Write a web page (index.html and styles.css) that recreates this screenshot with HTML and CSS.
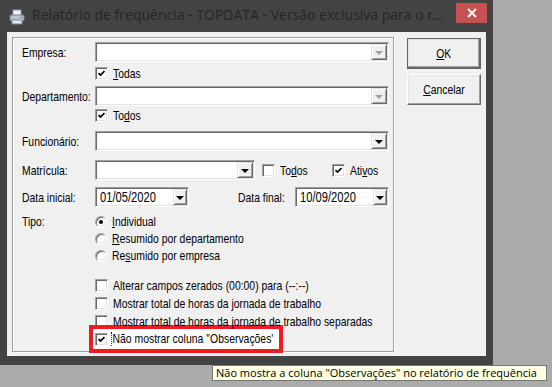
FILE: index.html
```html
<!DOCTYPE html>
<html lang="pt-BR">
<head>
    <meta charset="UTF-8">
    <title>Relatório de freqüência</title>
    <link rel="stylesheet" href="styles.css">
</head>
<body>

    <div class="window">
        <div class="titlebar">
            <svg class="app-icon" width="16" height="16" viewBox="0 0 16 16">
                <rect x="4" y="1" width="8" height="6" fill="#f4f4f4" stroke="#8aa0b8" stroke-width="1"/>
                <rect x="1" y="6" width="14" height="6" rx="1" fill="#b8c4d0" stroke="#6f7f90" stroke-width="1"/>
                <rect x="3" y="11" width="10" height="4" fill="#e6e6e6" stroke="#7d8a96" stroke-width="1"/>
                <rect x="11" y="8" width="2" height="1" fill="#5a9a5a"/>
            </svg>
            <span class="title">Relatório de freqüência - TOPDATA - Versão exclusiva para o r...</span>
            <div class="close-btn">
                <svg width="10" height="10" viewBox="0 0 10 10"><path d="M1 1 L9 9 M9 1 L1 9" stroke="#fff" stroke-width="1.8"/></svg>
            </div>
        </div>

        <div class="client">
            <div class="group">
                <div class="row combo-row">
                    <span class="lbl"><span class="txt">Empresa:</span></span>
                    <div class="combo disabled"><span class="drop"><i class="arrow"></i></span></div>
                </div>
                <div class="row check-row r-todas">
                    <span class="lbl"></span>
                    <span class="check on"><svg width="7" height="7" viewBox="0 0 7 7"><path d="M0.5 3 L2.5 5 L6.5 1" stroke="#000" stroke-width="1.7" fill="none"/></svg></span>
                    <span class="opt txt"><u>T</u>odas</span>
                </div>
                <div class="row combo-row r-depto">
                    <span class="lbl"><span class="txt">Departamento:</span></span>
                    <div class="combo disabled"><span class="drop"><i class="arrow"></i></span></div>
                </div>
                <div class="row check-row r-todos">
                    <span class="lbl"></span>
                    <span class="check on"><svg width="7" height="7" viewBox="0 0 7 7"><path d="M0.5 3 L2.5 5 L6.5 1" stroke="#000" stroke-width="1.7" fill="none"/></svg></span>
                    <span class="opt txt">To<u>d</u>os</span>
                </div>
                <div class="row combo-row r-func">
                    <span class="lbl"><span class="txt">Funcionário:</span></span>
                    <div class="combo"><span class="drop"><i class="arrow"></i></span></div>
                </div>
                <div class="row combo-row r-matr">
                    <span class="lbl"><span class="txt">Matrícula:</span></span>
                    <div class="combo short"><span class="drop"><i class="arrow"></i></span></div>
                    <div class="inline-opt opt-todos">
                        <span class="check"></span>
                        <span class="opt txt">To<u>d</u>os</span>
                    </div>
                    <div class="inline-opt">
                        <span class="check on"><svg width="7" height="7" viewBox="0 0 7 7"><path d="M0.5 3 L2.5 5 L6.5 1" stroke="#000" stroke-width="1.7" fill="none"/></svg></span>
                        <span class="opt txt">Ati<u>v</u>os</span>
                    </div>
                </div>
                <div class="row combo-row r-data">
                    <span class="lbl"><span class="txt">Data inicial:</span></span>
                    <div class="combo date"><span class="val txt">01/05/2020</span><span class="drop"><i class="arrow"></i></span></div>
                    <span class="lbl-final txt">Data final:</span>
                    <div class="combo date"><span class="val txt">10/09/2020</span><span class="drop"><i class="arrow"></i></span></div>
                </div>
                <div class="row tipo">
                    <span class="lbl"><span class="txt">Tipo:</span></span>
                    <div class="radios">
                        <div class="radio-row"><span class="radio on"></span><span class="opt txt"><u>I</u>ndividual</span></div>
                        <div class="radio-row"><span class="radio"></span><span class="opt txt"><u>R</u>esumido por departamento</span></div>
                        <div class="radio-row"><span class="radio"></span><span class="opt txt">Re<u>s</u>umido por empresa</span></div>
                    </div>
                </div>
                <div class="options">
                    <div class="row opt-row">
                        <span class="lbl"></span>
                        <span class="check"></span>
                        <span class="opt txt">Alterar campos zerados (00:00) para (--:--)</span>
                    </div>
                    <div class="row opt-row">
                        <span class="lbl"></span>
                        <span class="check"></span>
                        <span class="opt txt">Mostrar total de horas da jornada de trabalho</span>
                    </div>
                    <div class="row opt-row">
                        <span class="lbl"></span>
                        <span class="check"></span>
                        <span class="opt txt">Mostrar total de horas da jornada de trabalho separadas</span>
                    </div>
                    <div class="row opt-row">
                        <span class="lbl"></span>
                        <div class="highlight">
                            <span class="check on"><svg width="7" height="7" viewBox="0 0 7 7"><path d="M0.5 3 L2.5 5 L6.5 1" stroke="#000" stroke-width="1.7" fill="none"/></svg></span>
                            <span class="opt focus">Não mostrar coluna ''Observações'</span>
                        </div>
                    </div>
                </div>
            </div>

            <div class="buttons">
                <div class="btn default"><span class="txt"><u>O</u>K</span></div>
                <div class="btn"><span class="txt"><u>C</u>ancelar</span></div>
            </div>
        </div>
    </div>

    <div class="tooltip">Não mostra a coluna "Observações" no relatório de frequência</div>

</body>
</html>
```

FILE: styles.css
```css
html, body {
    margin: 0;
    padding: 0;
}
body {
    width: 552px;
    height: 387px;
    overflow: hidden;
    background-color: #ababab;
    font-family: "Liberation Sans", Arial, sans-serif;
    font-size: 13.5px;
    color: #000;
    position: relative;
}
u {
    text-decoration: underline;
    text-underline-offset: 1px;
}
/* the dialog font is a tall, narrow bitmap face */
.txt {
    display: inline-block;
    transform: scaleX(0.77);
    transform-origin: 0 50%;
    white-space: nowrap;
}

/* window frame */
.window {
    width: 493px;
    height: 365px;
    background-color: #434343;
    display: flex;
    flex-direction: column;
}
.titlebar {
    height: 32px;
    display: flex;
    align-items: flex-start;
    position: relative;
}
.app-icon {
    margin: 9px 0 0 9px;
}
.title {
    margin: 5px 0 0 7px;
    font-family: "Open Sans", "Noto Sans", sans-serif;
    font-size: 14px;
    color: #262626;
    white-space: nowrap;
}
.close-btn {
    position: absolute;
    left: 456px;
    top: 3px;
    width: 31px;
    height: 20px;
    background-color: #c75050;
    display: flex;
    align-items: center;
    justify-content: center;
}
.client {
    flex: 1;
    margin: 0 7px 9px 7px;
    background-color: #f0f0f0;
    display: flex;
    padding: 5px 0 0 5px;
}

/* group box */
.group {
    width: 382px;
    height: 315px;
    box-sizing: border-box;
    border: 1px solid #a0a0a0;
    box-shadow: inset 1px 1px 0 #fff, 1px 1px 0 #fff;
    padding: 4px 4px 0 9px;
}
.row {
    display: flex;
    align-items: center;
}
.lbl {
    width: 73px;
    flex-shrink: 0;
    white-space: nowrap;
}
.combo-row {
    height: 20px;
}
.check-row {
    height: 14px;
}
.r-todas { margin-top: 4px; }
.r-depto { margin-top: 6px; }
.r-todos { margin-top: 2px; }
.r-func { margin-top: 9px; }
.r-matr { margin-top: 9px; }
.r-data { margin-top: 7px; }
.tipo {
    margin-top: 6px;
    align-items: flex-start;
}
.tipo .lbl {
    line-height: 17px;
}
.options {
    margin-top: 12px;
}
.opt-row {
    height: 18px;
}
.opt {
    margin-left: 5px;
    white-space: nowrap;
}

/* sunken combo box */
.combo {
    flex: 1;
    height: 20px;
    box-sizing: border-box;
    background-color: #fff;
    border: 1px solid;
    border-color: #a0a0a0 #fff #fff #a0a0a0;
    box-shadow: inset 1px 1px 0 #696969, inset -1px -1px 0 #e3e3e3;
    display: flex;
    justify-content: flex-end;
    align-items: center;
    padding: 1px;
}
.combo.short {
    flex: none;
    width: 160px;
}
.combo.date {
    flex: none;
    width: 94px;
    justify-content: space-between;
}
.combo .val {
    margin-left: 3px;
    font-size: 14.5px;
}
.drop {
    width: 16px;
    height: 16px;
    box-sizing: border-box;
    background-color: #f0f0f0;
    border: 1px solid;
    border-color: #e3e3e3 #696969 #696969 #e3e3e3;
    box-shadow: inset 1px 1px 0 #fff, inset -1px -1px 0 #a0a0a0;
    display: flex;
    align-items: center;
    justify-content: center;
}
.arrow {
    width: 0;
    height: 0;
    border-left: 4px solid transparent;
    border-right: 4px solid transparent;
    border-top: 4px solid #000;
    margin-top: 1px;
}
.disabled .arrow {
    border-top-color: #a0a0a0;
}
.lbl-final {
    margin-left: auto;
    margin-right: 10px;
    transform-origin: 100% 50%;
}

/* checkbox and radio */
.check {
    width: 13px;
    height: 13px;
    flex-shrink: 0;
    box-sizing: border-box;
    background-color: #fff;
    border: 1px solid;
    border-color: #a0a0a0 #fff #fff #a0a0a0;
    box-shadow: inset 1px 1px 0 #696969, inset -1px -1px 0 #e3e3e3;
    display: flex;
    align-items: center;
    justify-content: center;
}
.inline-opt {
    display: flex;
    align-items: center;
}
.opt-todos {
    margin-left: 7px;
    width: 70px;
}
.radios {
    display: flex;
    flex-direction: column;
}
.radio-row {
    height: 17px;
    display: flex;
    align-items: center;
}
.radio {
    width: 12px;
    height: 12px;
    box-sizing: border-box;
    border-radius: 50%;
    background-color: #fff;
    border: 1px solid;
    border-color: #a0a0a0 #fff #fff #a0a0a0;
    box-shadow: inset 1px 1px 0 #696969, inset -1px -1px 0 #e3e3e3;
    position: relative;
    flex-shrink: 0;
}
.radio.on::after {
    content: "";
    position: absolute;
    left: 3px;
    top: 3px;
    width: 4px;
    height: 4px;
    border-radius: 50%;
    background-color: #000;
}

/* annotation around last option */
.highlight {
    display: flex;
    align-items: center;
    margin-left: -6px;
    width: 184px;
    padding-left: 2px;
    height: 20px;
    border: 4px solid #ed1c24;
    background-color: #fff;
}
.focus {
    display: inline-block;
    width: 218px;
    transform: scaleX(0.77);
    transform-origin: 0 50%;
    border-left: 1px dotted #000;
    padding-left: 1px;
    margin-left: 3px;
    line-height: 14px;
}

/* buttons */
.buttons {
    display: flex;
    flex-direction: column;
    gap: 5px;
    margin: 1px 0 0 13px;
}
.btn {
    width: 74px;
    height: 31px;
    box-sizing: border-box;
    background-color: #f0f0f0;
    border: 1px solid;
    border-color: #fff #696969 #696969 #fff;
    box-shadow: inset -1px -1px 0 #a0a0a0, inset 1px 1px 0 #e3e3e3;
    display: flex;
    align-items: center;
    justify-content: center;
}
.btn .txt {
    transform-origin: 50% 50%;
}
.btn.default {
    outline: 1px solid #646464;
    outline-offset: -1px;
    border-width: 1px 2px 2px 1px;
}

/* tooltip */
.tooltip {
    position: absolute;
    left: 212px;
    top: 365px;
    width: 335px;
    height: 16px;
    box-sizing: border-box;
    background-color: #ffffe1;
    border: 1px solid #767676;
    font-family: "Open Sans", "Noto Sans", sans-serif;
    font-size: 11px;
    line-height: 14px;
    padding-left: 3px;
    white-space: nowrap;
    overflow: hidden;
}
```
